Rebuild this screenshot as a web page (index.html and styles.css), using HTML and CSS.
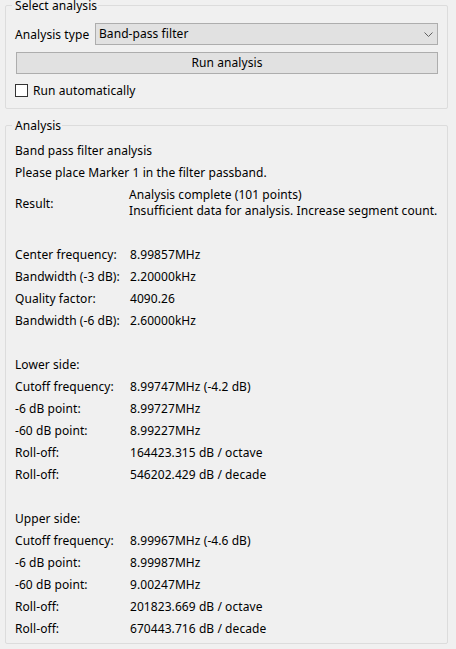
FILE: index.html
```html
<!DOCTYPE html>
<html lang="en">
<head>
<meta charset="utf-8">
<title>Analysis</title>
<link rel="stylesheet" href="styles.css">
</head>
<body>
<fieldset class="group group-select">
  <legend class="group-title">Select analysis</legend>
  <div class="type-row">
    <span class="type-label">Analysis type</span>
    <div class="combo">
      <span class="combo-text">Band-pass filter</span>
      <svg class="combo-arrow" width="9" height="5" viewBox="0 0 9 5"><polyline points="0.5,0.5 4.5,4.5 8.5,0.5" fill="none" stroke="#606060" stroke-width="1"/></svg>
    </div>
  </div>
  <button class="run-btn" type="button">Run analysis</button>
  <label class="check-row"><span class="check-box"></span><span>Run automatically</span></label>
</fieldset>

<fieldset class="group group-analysis">
  <legend class="group-title">Analysis</legend>
  <div class="line">Band pass filter analysis</div>
  <div class="line">Please place Marker 1 in the filter passband.</div>
  <div class="result">
    <div class="result-label">Result:</div>
    <div class="result-text">Analysis complete (101 points)<br>Insufficient data for analysis. Increase segment count.</div>
  </div>
  <div class="spacer"></div>
  <div class="kv"><span>Center frequency:</span><span>8.99857MHz</span></div>
  <div class="kv"><span>Bandwidth (-3 dB):</span><span>2.20000kHz</span></div>
  <div class="kv"><span>Quality factor:</span><span>4090.26</span></div>
  <div class="kv"><span>Bandwidth (-6 dB):</span><span>2.60000kHz</span></div>
  <div class="spacer"></div>
  <div class="line">Lower side:</div>
  <div class="kv"><span>Cutoff frequency:</span><span>8.99747MHz (-4.2 dB)</span></div>
  <div class="kv"><span>-6 dB point:</span><span>8.99727MHz</span></div>
  <div class="kv"><span>-60 dB point:</span><span>8.99227MHz</span></div>
  <div class="kv"><span>Roll-off:</span><span>164423.315 dB / octave</span></div>
  <div class="kv"><span>Roll-off:</span><span>546202.429 dB / decade</span></div>
  <div class="spacer"></div>
  <div class="line">Upper side:</div>
  <div class="kv"><span>Cutoff frequency:</span><span>8.99967MHz (-4.6 dB)</span></div>
  <div class="kv"><span>-6 dB point:</span><span>8.99987MHz</span></div>
  <div class="kv"><span>-60 dB point:</span><span>9.00247MHz</span></div>
  <div class="kv"><span>Roll-off:</span><span>201823.669 dB / octave</span></div>
  <div class="kv"><span>Roll-off:</span><span>670443.716 dB / decade</span></div>
</fieldset>
</body>
</html>
```

FILE: styles.css
```css
html, body {
  margin: 0;
  padding: 0;
  background: #f0f0f0;
}
body {
  font-family: "Noto Sans", "Open Sans", sans-serif;
  font-size: 12px;
  letter-spacing: 0.07px;
  color: #000;
  overflow: hidden;
}
.group {
  margin: 0 8px 0 5px;
  border: 1px solid #dcdcdc;
  border-radius: 2px;
  padding: 0 9px;
  min-width: 0;
}
.group-title {
  margin-left: -3px;
  padding: 0 1px 0 3px;
  line-height: 15px;
  height: 15px;
}
.group-select {
  margin-top: -2px;
  padding-top: 10px;
  padding-bottom: 7px;
}
.type-row {
  display: flex;
  align-items: center;
  height: 22px;
}
.type-label {
  width: 80px;
  flex: none;
}
.combo {
  flex: 1;
  height: 20px;
  border: 1px solid #adadad;
  background: #e1e1e1;
  display: flex;
  align-items: center;
  padding: 0 4px 0 3px;
  line-height: 20px;
}
.combo-text { flex: 1; }
.combo-arrow { display: block; }
.run-btn {
  display: block;
  margin: 7px 0 0 1px;
  width: calc(100% - 1px);
  height: 22px;
  border: 1px solid #adadad;
  background: #e1e1e1;
  font: inherit;
  letter-spacing: inherit;
  color: #000;
  padding: 0;
  line-height: 20px;
}
.check-row {
  display: flex;
  align-items: center;
  height: 22px;
  margin-top: 5px;
  gap: 5px;
}
.check-box {
  width: 11px;
  height: 11px;
  border: 1px solid #333;
  background: #fff;
}
.group-analysis {
  margin-top: 9px;
  padding-top: 7px;
  padding-bottom: 3px;
}
.line, .kv {
  height: 22px;
  line-height: 22px;
  white-space: nowrap;
}
.kv {
  display: grid;
  grid-template-columns: 115px 1fr;
}
.result {
  display: grid;
  grid-template-columns: 114px 1fr;
  align-items: center;
  height: 38px;
}
.result-text {
  line-height: 16px;
  white-space: nowrap;
}
.spacer { height: 22px; }
```
